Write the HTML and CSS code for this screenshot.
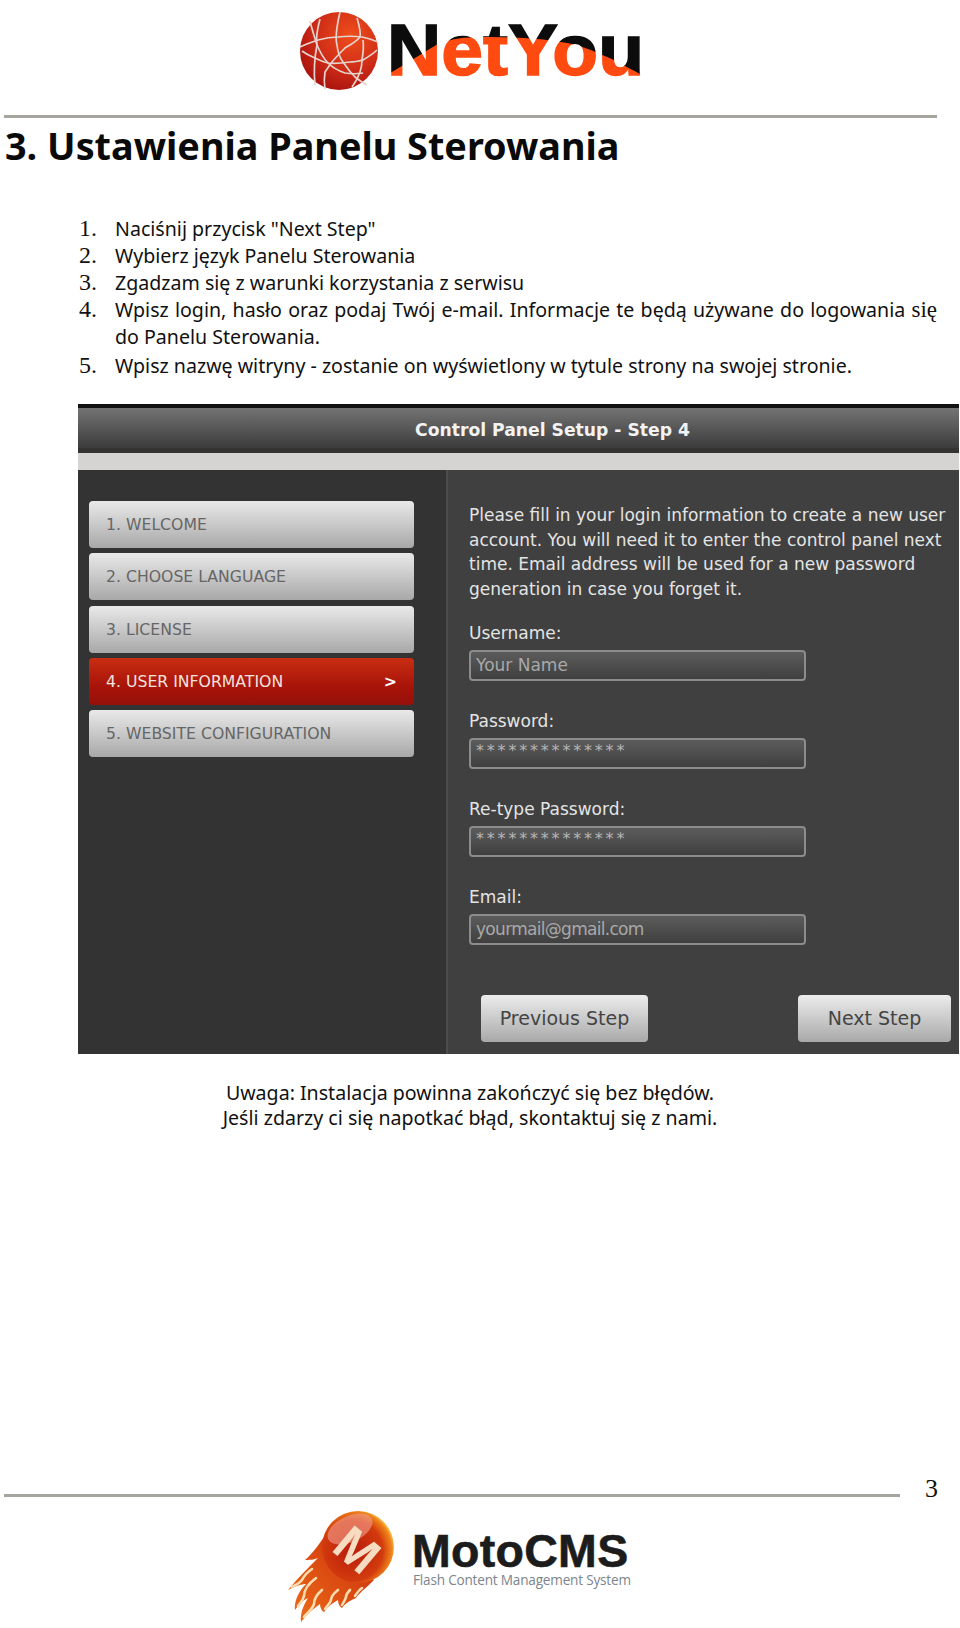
FILE: index.html
```html
<!DOCTYPE html>
<html lang="pl">
<head>
    <meta charset="UTF-8">
    <title>NetYou - Ustawienia Panelu Sterowania</title>
    <link rel="stylesheet" href="styles.css">
</head>
<body>
    <div class="logo-top">
        <svg width="380" height="100" viewBox="280 0 380 100">
            <defs>
                <radialGradient id="kula" cx="0.65" cy="0.3" r="0.8">
                    <stop offset="0" stop-color="#ee4e1c"/>
                    <stop offset="0.55" stop-color="#cf2c17"/>
                    <stop offset="1" stop-color="#a30f0c"/>
                </radialGradient>
                <pattern id="napis" patternUnits="userSpaceOnUse" x="380" y="0" width="280" height="100">
                    <rect width="280" height="100" fill="#ff4a10"/>
                    <path d="M0 0H280V78L260 74C245 66 235 60 227 57C215 52 200 44 180 42C160 38 130 37 100 37C85 37 72 39 60 43C50 48 30 62 10 73L0 76Z" fill="#0c0c0c"/>
                </pattern>
            </defs>
            <circle cx="339" cy="51" r="39" fill="url(#kula)"/>
            <g fill="none" stroke="#e6d3cd" stroke-width="1.7">
                <path d="M320 19C317 30 316 40 317 45C314 60 314 75 315 85"/>
                <path d="M340 12C337 25 335 38 337 45C338 54 340 58 343 62C347 68 352 74 355 77C360 81 363 83 367 85"/>
                <path d="M300 47C306 44 312 42 318 40C325 38 331 37 338 37C346 36 354 36 362 37C368 38 373 40 378 42"/>
                <path d="M357 18C359 25 361 31 360 37C356 42 350 45 345 48C340 53 336 57 332 62C329 66 327 69 325 72C324 78 324 83 325 89"/>
                <path d="M302 51C306 54 310 56 315 58C319 60 323 62 328 63C335 64 343 63 350 62C355 62 359 61 363 60C368 57 373 54 377 50"/>
                <path d="M310 21C312 30 315 38 317 45C320 52 323 58 328 63C333 68 339 71 345 73C351 74 357 74 363 73"/>
                <path d="M363 40C364 47 363 54 362 60C362 65 361 69 360 72C358 78 355 83 352 87"/>
            </g>
            <text x="387" y="75" class="logo-netyou" fill="url(#napis)" stroke="url(#napis)" stroke-width="1.5" textLength="257" lengthAdjust="spacingAndGlyphs">NetYou</text>
        </svg>
    </div>
    <div class="linia-topo"></div>

    <h1>3. Ustawienia Panelu Sterowania</h1>

    <ol class="lista">
        <li><span class="nr">1.</span><span>Naciśnij przycisk "Next Step"</span></li>
        <li><span class="nr">2.</span><span>Wybierz język Panelu Sterowania</span></li>
        <li><span class="nr">3.</span><span>Zgadzam się z warunki korzystania z serwisu</span></li>
        <li><span class="nr">4.</span><span class="justo">Wpisz login, hasło oraz podaj Twój e-mail. Informacje te będą używane do logowania <span class="serif">się</span> do Panelu Sterowania.</span></li>
        <li><span class="nr">5.</span><span>Wpisz nazwę witryny - zostanie on wyświetlony w tytule strony na swojej stronie.</span></li>
    </ol>

    <div class="panel">
        <div class="panel-topo">Control Panel Setup - Step 4</div>
        <div class="panel-faixa"></div>
        <div class="panel-corpo">
            <div class="passos">
                <div class="passo">1. WELCOME</div>
                <div class="passo">2. CHOOSE LANGUAGE</div>
                <div class="passo">3. LICENSE</div>
                <div class="passo ativo">4. USER INFORMATION <span class="seta">&gt;</span></div>
                <div class="passo">5. WEBSITE CONFIGURATION</div>
            </div>
            <div class="formulario">
                <p class="intro">Please fill in your login information to create a new user account. You will need it to enter the control panel next time. Email address will be used for a new password generation in case you forget it.</p>
                <div class="rotulo">Username:</div>
                <div class="campo">Your Name</div>
                <div class="rotulo">Password:</div>
                <div class="campo senha">**************</div>
                <div class="rotulo">Re-type Password:</div>
                <div class="campo senha">**************</div>
                <div class="rotulo">Email:</div>
                <div class="campo email">yourmail@gmail.com</div>
                <div class="botoes">
                    <div class="botao anterior">Previous Step</div>
                    <div class="botao proximo">Next Step</div>
                </div>
            </div>
        </div>
    </div>

    <p class="uwaga">Uwaga: Instalacja powinna zakończyć się bez błędów.<br>Jeśli zdarzy ci się napotkać błąd, skontaktuj się z nami.</p>

    <div class="rodape">
        <div class="linia-rodape"></div>
        <div class="numero">3</div>
    </div>

    <div class="logo-baixo">
        <svg width="380" height="132" viewBox="280 1496 380 132">
            <defs>
                <radialGradient id="bola" cx="0.42" cy="0.55" r="0.6">
                    <stop offset="0" stop-color="#b81c0c"/>
                    <stop offset="0.7" stop-color="#d23a0e"/>
                    <stop offset="0.92" stop-color="#f0861a"/>
                    <stop offset="1" stop-color="#fcd060"/>
                </radialGradient>
                <linearGradient id="fogo" x1="1" y1="0" x2="0" y2="1">
                    <stop offset="0" stop-color="#c92a0c"/>
                    <stop offset="1" stop-color="#ee6f18"/>
                </linearGradient>
            </defs>
            <path d="M326 1534C318 1546 312 1554 305 1560C312 1560 316 1559 318 1558C308 1568 298 1578 288 1590C296 1586 302 1584 306 1584C298 1592 294 1602 295 1610C299 1604 303 1600 308 1598C303 1606 300 1614 301 1622C307 1614 314 1608 320 1604C320 1608 322 1611 324 1612C328 1606 334 1602 338 1600C338 1604 340 1607 342 1608C346 1602 352 1600 356 1598C358 1594 364 1590 374 1580Z" fill="url(#fogo)"/>
            <g fill="none" stroke="#fbdcae" stroke-width="2.6" stroke-linecap="round">
                <path d="M312 1569C306 1573 304 1576 302 1580C299 1584 295 1585 292 1587"/>
                <path d="M316 1578C308 1584 304 1590 304 1596C303 1601 300 1603 298 1606"/>
                <path d="M322 1590C316 1595 314 1600 314 1604C312 1610 307 1613 304 1617"/>
                <path d="M338 1590C333 1594 331 1597 331 1600C330 1604 327 1606 325 1609"/>
                <path d="M350 1590C348 1592 346 1594 346 1597C345 1601 343 1603 342 1605"/>
                <path d="M362 1588C359 1590 357 1593 355 1596"/>
            </g>
            <circle cx="358" cy="1547" r="36" fill="url(#bola)"/>
            <ellipse cx="350" cy="1529" rx="24" ry="13" fill="#f3a090" opacity="0.6" transform="rotate(-25 350 1529)"/>
            <text x="0" y="17" class="logo-m" text-anchor="middle" transform="translate(357 1550) rotate(40)">M</text>
            <text x="412" y="1567" class="logo-moto">MotoCMS</text>
            <text x="413" y="1585" class="logo-sub">Flash Content Management System</text>
        </svg>
    </div>
</body>
</html>
```

FILE: styles.css
```css
body {
    margin: 0;
    width: 960px;
    height: 1628px;
    overflow: hidden;
    background-color: #fff;
    color: #111;
    font-family: "Noto Sans", Arial, sans-serif;
}

.logo-top {
    height: 115px;
    padding-left: 280px;
}

.logo-top svg, .logo-baixo svg {
    display: block;
}

.logo-netyou {
    font-family: "Liberation Sans", Arial, sans-serif;
    font-weight: bold;
    font-size: 72px;
}

.linia-topo {
    width: 933px;
    height: 3px;
    margin-left: 4px;
    background-color: #a6a69e;
}

h1 {
    margin: 5px 0 0 5px;
    font-family: "Noto Sans", Arial, sans-serif;
    font-size: 37.8px;
    line-height: 46px;
    font-weight: bold;
    color: #0a0a0a;
}

.lista {
    list-style: none;
    margin: 46px 0 0 0;
    padding: 0 0 0 79px;
    width: 858px;
    font-size: 19.6px;
    line-height: 27px;
}

.lista li {
    display: flex;
}

.lista li:last-child {
    margin-top: 2px;
}

.lista .nr {
    flex: 0 0 36px;
    font-family: "Liberation Serif", serif;
    font-size: 24px;
}

.justo {
    text-align: justify;
}

.serif {
    font-family: "Liberation Serif", serif;
    font-size: 23px;
}

.panel {
    width: 881px;
    height: 650px;
    margin: 25px 0 0 78px;
    background-color: #404040;
    font-family: "DejaVu Sans", sans-serif;
}

.panel-topo {
    height: 45px;
    border-top: 4px solid #111;
    background: linear-gradient(#737373, #3b3b3b 90%, #333 90%);
    color: #f2f2f2;
    font-size: 17.2px;
    font-weight: bold;
    line-height: 44px;
    text-align: center;
    padding-left: 68px;
}

.panel-faixa {
    height: 17px;
    background-color: #d5d4d2;
}

.panel-corpo {
    display: flex;
    height: 584px;
}

.passos {
    width: 369px;
    box-sizing: border-box;
    padding: 31px 0 0 11px;
    background-color: #333;
    display: flex;
    flex-direction: column;
    gap: 5.25px;
}

.passo {
    width: 325px;
    height: 47px;
    box-sizing: border-box;
    padding: 0 17px;
    border-radius: 4px;
    background: linear-gradient(#e9e9e9, #a8a8a8);
    color: #666;
    font-size: 15.7px;
    line-height: 47px;
}

.passo.ativo {
    display: flex;
    justify-content: space-between;
    background: linear-gradient(#c92e12, #a81409 60%, #95100a);
    color: #f3e3df;
}

.seta {
    color: #fff;
    font-weight: bold;
}

.formulario {
    flex: 1;
    padding: 33px 0 0 21px;
    border-left: 2px solid #4c4c4c;
    color: #e4e4e4;
    font-size: 17px;
}

.intro {
    margin: 0 0 20px 0;
    line-height: 24.5px;
    width: 490px;
}

.rotulo {
    line-height: 24px;
    height: 29px;
}

.campo {
    width: 337px;
    height: 31px;
    box-sizing: border-box;
    padding-left: 5px;
    margin-bottom: 28px;
    border: 2px solid #8c8c8c;
    border-radius: 4px;
    background: linear-gradient(#5c5c5c, #3f3f3f);
    color: #a8a8a8;
    font-size: 17px;
    line-height: 27px;
}

.campo.senha {
    letter-spacing: 2.8px;
    line-height: 22px;
    color: #b5b5b5;
    font-size: 16px;
}

.campo.email {
    letter-spacing: -0.7px;
}

.botoes {
    display: flex;
    justify-content: space-between;
    width: 470px;
    margin: 24px 0 0 12px;
    padding-top: 22px;
}

.botao {
    height: 47px;
    border-radius: 4px;
    background: linear-gradient(#ececec, #a9a9a9);
    color: #444;
    font-size: 19px;
    line-height: 47px;
    text-align: center;
}

.anterior {
    width: 167px;
}

.proximo {
    width: 153px;
}

.uwaga {
    margin: 26px 0 0 0;
    width: 940px;
    text-align: center;
    font-size: 19.6px;
    line-height: 25px;
}

.rodape {
    display: flex;
    align-items: flex-start;
    margin-top: 364px;
    padding-left: 4px;
}

.linia-rodape {
    width: 896px;
    height: 3px;
    background-color: #a6a69e;
}

.numero {
    margin: -19px 0 0 25px;
    font-family: "Liberation Serif", serif;
    font-size: 26px;
    line-height: 28px;
}

.logo-baixo {
    padding-left: 280px;
    margin-top: -7px;
}

.logo-m {
    font-family: "Liberation Sans", Arial, sans-serif;
    font-weight: bold;
    font-size: 50px;
    fill: #f6dcc0;
}

.logo-moto {
    font-family: "Liberation Sans", Arial, sans-serif;
    font-weight: bold;
    font-size: 46.5px;
    letter-spacing: 0.3px;
    fill: #1c1c1c;
    stroke: #1c1c1c;
    stroke-width: 0.6px;
}

.logo-sub {
    font-family: "Open Sans", Arial, sans-serif;
    font-size: 13.6px;
    letter-spacing: -0.2px;
    fill: #7c858d;
}
```
